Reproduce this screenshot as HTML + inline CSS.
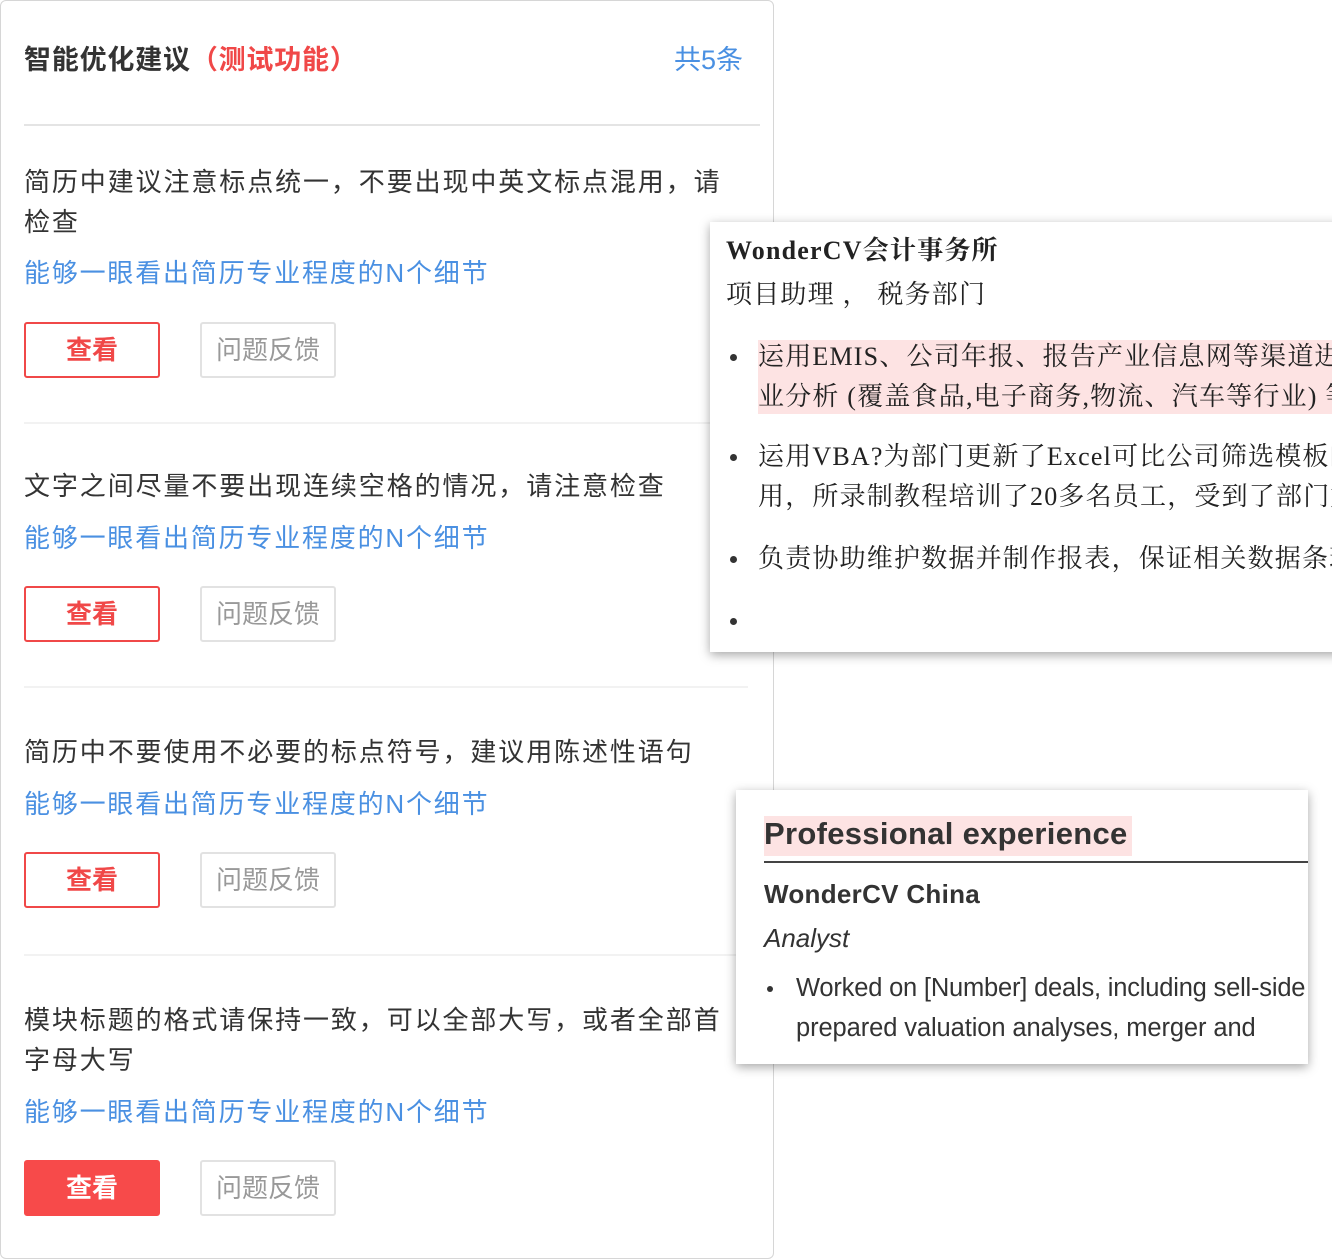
<!DOCTYPE html>
<html><head><meta charset="utf-8"><style>
*{margin:0;padding:0;box-sizing:border-box}
body{width:1332px;height:1260px;background:#fff;position:relative;overflow:hidden;font-family:"Liberation Sans","Noto Sans CJK SC",sans-serif;color:#333}
.a{position:absolute;white-space:nowrap}
.card{position:absolute;left:0;top:0;width:774px;height:1259px;border:1px solid #d6d6d6;border-radius:6px}
.t{font-size:26px;line-height:40px;letter-spacing:1.9px}
.lk{font-size:26px;line-height:40px;color:#4a90e2;letter-spacing:1.8px}
.b1{position:absolute;width:136px;height:56px;border:2px solid #f04848;border-radius:3px;color:#f04848;font-size:26px;line-height:52px;text-align:center;font-weight:bold}
.b1.f{background:#f74a4a;border-color:#f74a4a;color:#fff}
.b2{position:absolute;width:136px;height:56px;border:2px solid #e2e2e2;border-radius:3px;color:#999;font-size:26px;line-height:52px;text-align:center}
.hr{position:absolute;left:24px;height:2px;background:#f2f2f2}
.p{position:absolute;background:#fff;box-shadow:0 3px 10px rgba(0,0,0,.35)}
.s{font-family:"Liberation Serif","Noto Serif CJK SC",serif;font-size:26px;line-height:40px;color:#222;letter-spacing:1.2px}
.dot{position:absolute;width:7px;height:7px;border-radius:50%;background:#333}
</style></head><body>
<div class="card"></div>
<div class="a" style="left:24px;top:40px;font-size:27px;line-height:40px;font-weight:bold;color:#333;letter-spacing:0.8px">智能优化建议<span style="color:#f04848">（测试功能）</span></div>
<div class="a" style="left:674px;top:40px;font-size:27px;line-height:40px;color:#4a90e2">共5条</div>
<div style="position:absolute;left:24px;top:124px;width:736px;height:2px;background:#e4e4e4"></div>

<div class="a t" style="left:24px;top:162px">简历中建议注意标点统一，不要出现中英文标点混用，请</div>
<div class="a t" style="left:24px;top:202px">检查</div>
<div class="a lk" style="left:24px;top:253px">能够一眼看出简历专业程度的N个细节</div>
<div class="b1" style="left:24px;top:322px">查看</div>
<div class="b2" style="left:200px;top:322px">问题反馈</div>
<div class="hr" style="top:422px;width:724px"></div>

<div class="a t" style="left:24px;top:466px">文字之间尽量不要出现连续空格的情况，请注意检查</div>
<div class="a lk" style="left:24px;top:518px">能够一眼看出简历专业程度的N个细节</div>
<div class="b1" style="left:24px;top:586px">查看</div>
<div class="b2" style="left:200px;top:586px">问题反馈</div>
<div class="hr" style="top:686px;width:724px"></div>

<div class="a t" style="left:24px;top:732px">简历中不要使用不必要的标点符号，建议用陈述性语句</div>
<div class="a lk" style="left:24px;top:784px">能够一眼看出简历专业程度的N个细节</div>
<div class="b1" style="left:24px;top:852px">查看</div>
<div class="b2" style="left:200px;top:852px">问题反馈</div>
<div class="hr" style="top:954px;width:724px"></div>

<div class="a t" style="left:24px;top:1000px">模块标题的格式请保持一致，可以全部大写，或者全部首</div>
<div class="a t" style="left:24px;top:1040px">字母大写</div>
<div class="a lk" style="left:24px;top:1092px">能够一眼看出简历专业程度的N个细节</div>
<div class="b1 f" style="left:24px;top:1160px">查看</div>
<div class="b2" style="left:200px;top:1160px">问题反馈</div>

<div class="p" style="left:710px;top:222px;width:640px;height:430px;overflow:hidden">
<div class="a s" style="left:16px;top:9px;font-weight:bold">WonderCV会计事务所</div>
<div class="a s" style="left:16px;top:53px">项目助理 ， 税务部门</div>
<div style="position:absolute;left:48px;top:118px;width:600px;height:74px;background:#fde3e3"></div>
<div class="dot" style="left:20px;top:132px"></div>
<div class="a s" style="left:48px;top:115px">运用EMIS、公司年报、报告产业信息网等渠道进行行</div>
<div class="a s" style="left:48px;top:155px">业分析 (覆盖食品,电子商务,物流、汽车等行业) 等</div>
<div class="dot" style="left:20px;top:232px"></div>
<div class="a s" style="left:48px;top:215px">运用VBA?为部门更新了Excel可比公司筛选模板的使</div>
<div class="a s" style="left:48px;top:255px">用，所录制教程培训了20多名员工，受到了部门好评</div>
<div class="dot" style="left:20px;top:334px"></div>
<div class="a s" style="left:48px;top:317px">负责协助维护数据并制作报表，保证相关数据条理清晰</div>
<div class="dot" style="left:20px;top:396px"></div>
</div>

<div class="p" style="left:736px;top:790px;width:572px;height:274px;overflow:hidden">
<div style="position:absolute;left:28px;top:26px;width:368px;height:40px;background:#fde3e3"></div>
<div class="a" style="left:28px;top:24px;font-size:31px;line-height:40px;font-weight:bold;color:#333;letter-spacing:0.3px">Professional experience</div>
<div style="position:absolute;left:28px;top:71px;width:560px;height:2px;background:#444"></div>
<div class="a" style="left:28px;top:86px;font-size:26px;line-height:36px;font-weight:bold;color:#333;letter-spacing:0.3px">WonderCV China</div>
<div class="a" style="left:28px;top:130px;font-size:26px;line-height:36px;font-style:italic;color:#333">Analyst</div>
<div class="dot" style="left:31px;top:196px;width:6px;height:6px"></div>
<div class="a" style="left:60px;top:180px;font-size:25.5px;line-height:36px;color:#333;letter-spacing:-0.2px">Worked on [Number] deals, including sell-side</div>
<div class="a" style="left:60px;top:220px;font-size:25.5px;line-height:36px;color:#333;letter-spacing:-0.1px">prepared valuation analyses, merger and</div>
</div>
</body></html>
